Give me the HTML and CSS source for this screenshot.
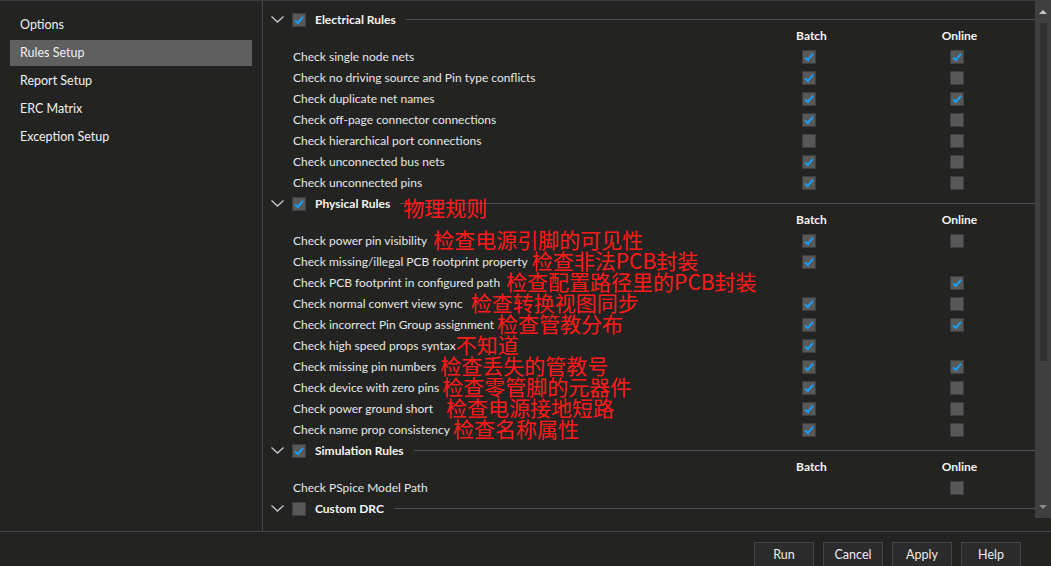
FILE: index.html
```html
<!DOCTYPE html>
<html>
<head>
<meta charset="utf-8">
<link rel="stylesheet" href="styles.css">
</head>
<body>
<div class="app">
  <div class="main">
    <nav class="side">
      <div class="nav-item">Options</div>
      <div class="nav-item selected">Rules Setup</div>
      <div class="nav-item">Report Setup</div>
      <div class="nav-item">ERC Matrix</div>
      <div class="nav-item">Exception Setup</div>
    </nav>
    <div class="content">
      <div class="scrollarea">
        <!-- Electrical -->
        <section class="section first">
          <div class="sec-head">
            <svg class="chev" viewBox="0 0 13 7"><polyline points="0.5,0.5 6.5,6 12.5,0.5"/></svg>
            <span class="cb checked"><svg viewBox="0 0 14 14"><polyline points="3,7.5 5.8,10 11,3.8"/></svg></span>
            <span class="sec-title">Electrical Rules</span>
            <span class="sec-line"></span>
          </div>
          <div class="grid colhead"><span></span><span>Batch</span><span></span><span>Online</span><span></span></div>
          <div class="grid row"><span class="lbl">Check single node nets</span><span class="cell"><i class="cb checked"><svg viewBox="0 0 14 14"><polyline points="3,7.5 5.8,10 11,3.8"/></svg></i></span><span></span><span class="cell"><i class="cb checked"><svg viewBox="0 0 14 14"><polyline points="3,7.5 5.8,10 11,3.8"/></svg></i></span><span></span></div>
          <div class="grid row"><span class="lbl">Check no driving source and Pin type conflicts</span><span class="cell"><i class="cb checked"><svg viewBox="0 0 14 14"><polyline points="3,7.5 5.8,10 11,3.8"/></svg></i></span><span></span><span class="cell"><i class="cb"></i></span><span></span></div>
          <div class="grid row"><span class="lbl">Check duplicate net names</span><span class="cell"><i class="cb checked"><svg viewBox="0 0 14 14"><polyline points="3,7.5 5.8,10 11,3.8"/></svg></i></span><span></span><span class="cell"><i class="cb checked"><svg viewBox="0 0 14 14"><polyline points="3,7.5 5.8,10 11,3.8"/></svg></i></span><span></span></div>
          <div class="grid row"><span class="lbl">Check off-page connector connections</span><span class="cell"><i class="cb checked"><svg viewBox="0 0 14 14"><polyline points="3,7.5 5.8,10 11,3.8"/></svg></i></span><span></span><span class="cell"><i class="cb"></i></span><span></span></div>
          <div class="grid row"><span class="lbl">Check hierarchical port connections</span><span class="cell"><i class="cb"></i></span><span></span><span class="cell"><i class="cb"></i></span><span></span></div>
          <div class="grid row"><span class="lbl">Check unconnected bus nets</span><span class="cell"><i class="cb checked"><svg viewBox="0 0 14 14"><polyline points="3,7.5 5.8,10 11,3.8"/></svg></i></span><span></span><span class="cell"><i class="cb"></i></span><span></span></div>
          <div class="grid row"><span class="lbl">Check unconnected pins</span><span class="cell"><i class="cb checked"><svg viewBox="0 0 14 14"><polyline points="3,7.5 5.8,10 11,3.8"/></svg></i></span><span></span><span class="cell"><i class="cb"></i></span><span></span></div>
        </section>

        <!-- Physical -->
        <section class="section">
          <div class="sec-head">
            <svg class="chev" viewBox="0 0 13 7"><polyline points="0.5,0.5 6.5,6 12.5,0.5"/></svg>
            <span class="cb checked"><svg viewBox="0 0 14 14"><polyline points="3,7.5 5.8,10 11,3.8"/></svg></span>
            <span class="sec-title">Physical Rules<span class="ann head-ann">物理规则</span></span>
            <span class="sec-line"></span>
          </div>
          <div class="grid colhead"><span></span><span>Batch</span><span></span><span>Online</span><span></span></div>
          <div class="grid row"><span class="lbl">Check power pin visibility<span class="ann g6">检查电源引脚的可见性</span></span><span class="cell"><i class="cb checked"><svg viewBox="0 0 14 14"><polyline points="3,7.5 5.8,10 11,3.8"/></svg></i></span><span></span><span class="cell"><i class="cb"></i></span><span></span></div>
          <div class="grid row"><span class="lbl">Check missing/illegal PCB footprint property<span class="ann g4">检查非法PCB封装</span></span><span class="cell"><i class="cb checked"><svg viewBox="0 0 14 14"><polyline points="3,7.5 5.8,10 11,3.8"/></svg></i></span><span></span><span class="cell"></span><span></span></div>
          <div class="grid row"><span class="lbl">Check PCB footprint in configured path<span class="ann g6">检查配置路径里的PCB封装</span></span><span class="cell"></span><span></span><span class="cell"><i class="cb checked"><svg viewBox="0 0 14 14"><polyline points="3,7.5 5.8,10 11,3.8"/></svg></i></span><span></span></div>
          <div class="grid row"><span class="lbl">Check normal convert view sync<span class="ann g8">检查转换视图同步</span></span><span class="cell"><i class="cb checked"><svg viewBox="0 0 14 14"><polyline points="3,7.5 5.8,10 11,3.8"/></svg></i></span><span></span><span class="cell"><i class="cb"></i></span><span></span></div>
          <div class="grid row"><span class="lbl">Check incorrect Pin Group assignment<span class="ann g3">检查管教分布</span></span><span class="cell"><i class="cb checked"><svg viewBox="0 0 14 14"><polyline points="3,7.5 5.8,10 11,3.8"/></svg></i></span><span></span><span class="cell"><i class="cb checked"><svg viewBox="0 0 14 14"><polyline points="3,7.5 5.8,10 11,3.8"/></svg></i></span><span></span></div>
          <div class="grid row"><span class="lbl">Check high speed props syntax<span class="ann g0">不知道</span></span><span class="cell"><i class="cb checked"><svg viewBox="0 0 14 14"><polyline points="3,7.5 5.8,10 11,3.8"/></svg></i></span><span></span><span class="cell"></span><span></span></div>
          <div class="grid row"><span class="lbl">Check missing pin numbers<span class="ann g4">检查丢失的管教号</span></span><span class="cell"><i class="cb checked"><svg viewBox="0 0 14 14"><polyline points="3,7.5 5.8,10 11,3.8"/></svg></i></span><span></span><span class="cell"><i class="cb checked"><svg viewBox="0 0 14 14"><polyline points="3,7.5 5.8,10 11,3.8"/></svg></i></span><span></span></div>
          <div class="grid row"><span class="lbl">Check device with zero pins<span class="ann g3">检查零管脚的元器件</span></span><span class="cell"><i class="cb checked"><svg viewBox="0 0 14 14"><polyline points="3,7.5 5.8,10 11,3.8"/></svg></i></span><span></span><span class="cell"><i class="cb"></i></span><span></span></div>
          <div class="grid row"><span class="lbl">Check power ground short<span class="ann g13">检查电源接地短路</span></span><span class="cell"><i class="cb checked"><svg viewBox="0 0 14 14"><polyline points="3,7.5 5.8,10 11,3.8"/></svg></i></span><span></span><span class="cell"><i class="cb"></i></span><span></span></div>
          <div class="grid row"><span class="lbl">Check name prop consistency<span class="ann g3">检查名称属性</span></span><span class="cell"><i class="cb checked"><svg viewBox="0 0 14 14"><polyline points="3,7.5 5.8,10 11,3.8"/></svg></i></span><span></span><span class="cell"><i class="cb"></i></span><span></span></div>
        </section>

        <!-- Simulation -->
        <section class="section">
          <div class="sec-head">
            <svg class="chev" viewBox="0 0 13 7"><polyline points="0.5,0.5 6.5,6 12.5,0.5"/></svg>
            <span class="cb checked"><svg viewBox="0 0 14 14"><polyline points="3,7.5 5.8,10 11,3.8"/></svg></span>
            <span class="sec-title">Simulation Rules</span>
            <span class="sec-line"></span>
          </div>
          <div class="grid colhead"><span></span><span>Batch</span><span></span><span>Online</span><span></span></div>
          <div class="grid row"><span class="lbl">Check PSpice Model Path</span><span class="cell"></span><span></span><span class="cell"><i class="cb"></i></span><span></span></div>
        </section>

        <!-- Custom DRC -->
        <section class="section">
          <div class="sec-head">
            <svg class="chev" viewBox="0 0 13 7"><polyline points="0.5,0.5 6.5,6 12.5,0.5"/></svg>
            <span class="cb"></span>
            <span class="sec-title">Custom DRC</span>
            <span class="sec-line"></span>
          </div>
        </section>
      </div>
      <div class="scrollbar">
        <div class="sb-up"></div>
        <div class="sb-track"><div class="sb-thumb"></div></div>
        <div class="sb-down"></div>
      </div>
    </div>
  </div>
  <div class="footer">
    <button class="btn">Run</button>
    <button class="btn">Cancel</button>
    <button class="btn">Apply</button>
    <button class="btn">Help</button>
  </div>
</div>
</body>
</html>
```
FILE: styles.css
```css
* { box-sizing: border-box; }
html, body {
  margin: 0;
  padding: 0;
  background: #232422;
  width: 1051px;
  height: 566px;
  overflow: hidden;
  font-family: Lato, "Open Sans", sans-serif;
  font-size: 12px;
  color: #e8e8e8;
}
.app {
  width: 1051px;
  height: 566px;
  border-top: 1px solid #3c3c3c;
  display: flex;
  flex-direction: column;
}
.main {
  height: 531px;
  flex: none;
  display: flex;
  border-bottom: 1px solid #474747;
}
.side {
  width: 263px;
  flex: none;
  border-right: 1px solid #474747;
  padding: 11px 10px 0 10px;
  display: flex;
  flex-direction: column;
  gap: 2px;
}
.nav-item {
  height: 26px;
  line-height: 26px;
  padding-left: 10px;
  font-size: 12.5px;
  color: #f0f0f0;
}
.nav-item.selected { background: #5f5f5f; }

.content {
  flex: 1;
  display: flex;
  min-width: 0;
}
.scrollarea {
  flex: 1;
  overflow: hidden;
  padding-top: 8px;
}
.sec-head {
  height: 21px;
  display: flex;
  align-items: center;
  padding-left: 8px;
}
.chev {
  width: 13px;
  height: 7px;
  margin-right: 8px;
  fill: none;
  stroke: #c8c8c8;
  stroke-width: 1.3;
}
.cb {
  display: inline-block;
  width: 14px;
  height: 14px;
  background: #585858;
  border: 1px solid #3e3e3e;
  flex: none;
  position: relative;
}
.cb svg {
  position: absolute;
  left: -1px;
  top: -1px;
  width: 14px;
  height: 14px;
  fill: none;
  stroke: #1b9df2;
  stroke-width: 2.1;
}
.sec-title {
  margin-left: 9px;
  font-weight: 700;
  color: #f4f4f4;
  position: relative;
  white-space: nowrap;
}
.sec-line {
  flex: 1;
  height: 1px;
  background: #525252;
  margin-left: 10px;
}
.grid {
  display: grid;
  grid-template-columns: 1fr 60px 88px 60px 48px;
  padding-left: 30px;
}
.colhead {
  height: 16px;
  line-height: 11px;
  font-weight: 700;
  color: #f4f4f4;
  text-align: center;
}
.colhead span { padding-left: 5px; }
.row {
  height: 21px;
  line-height: 21px;
  align-items: center;
}
.lbl { white-space: nowrap; color: #e6e6e6; }
.cell {
  display: flex;
  justify-content: center;
  align-items: center;
}
.ann {
  font-family: "Noto Sans CJK SC", sans-serif;
  font-weight: 400;
  font-size: 21px;
  color: #ff1a1a;
  line-height: 0;
  position: relative;
  top: 3px;
  margin-left: 5px;
}
.ann.g0 { margin-left: 0; }
.ann.g3 { margin-left: 3px; }
.ann.g4 { margin-left: 4px; }
.ann.g6 { margin-left: 6px; }
.ann.g8 { margin-left: 8px; }
.ann.g13 { margin-left: 13px; }
.head-ann {
  position: absolute;
  left: 100%;
  top: 1px;
  margin-left: 13px;
  line-height: 21px;
  font-weight: 400;
}

.scrollbar {
  width: 16px;
  flex: none;
  height: 517px;
  background: #3f3f3f;
  display: flex;
  flex-direction: column;
  align-items: center;
}
.sb-up, .sb-down {
  height: 22px;
  width: 16px;
  position: relative;
  flex: none;
}
.sb-up::after {
  content: "";
  position: absolute;
  left: 4px;
  top: 9px;
  border-left: 4px solid transparent;
  border-right: 4px solid transparent;
  border-bottom: 4px solid #c9c9c9;
}
.sb-down::after {
  content: "";
  position: absolute;
  left: 4px;
  top: 9px;
  border-left: 4px solid transparent;
  border-right: 4px solid transparent;
  border-top: 4px solid #8a8a8a;
}
.sb-track {
  flex: 1;
  width: 16px;
  display: flex;
  justify-content: center;
}
.sb-thumb {
  width: 7px;
  height: 338px;
  background: #2f2f2f;
}

.footer {
  flex: 1;
  min-height: 0;
  overflow: hidden;
  display: flex;
  justify-content: flex-end;
  align-items: flex-start;
  padding: 10px 30px 0 0;
  gap: 9px;
}
.btn {
  width: 60px;
  height: 28px;
  flex: none;
  background: #2b2b2b;
  border: 1px solid #464646;
  color: #ececec;
  font-family: Lato, "Open Sans", sans-serif;
  font-size: 12.5px;
  padding: 0 0 4px 0;
  margin: 0;
}
```
